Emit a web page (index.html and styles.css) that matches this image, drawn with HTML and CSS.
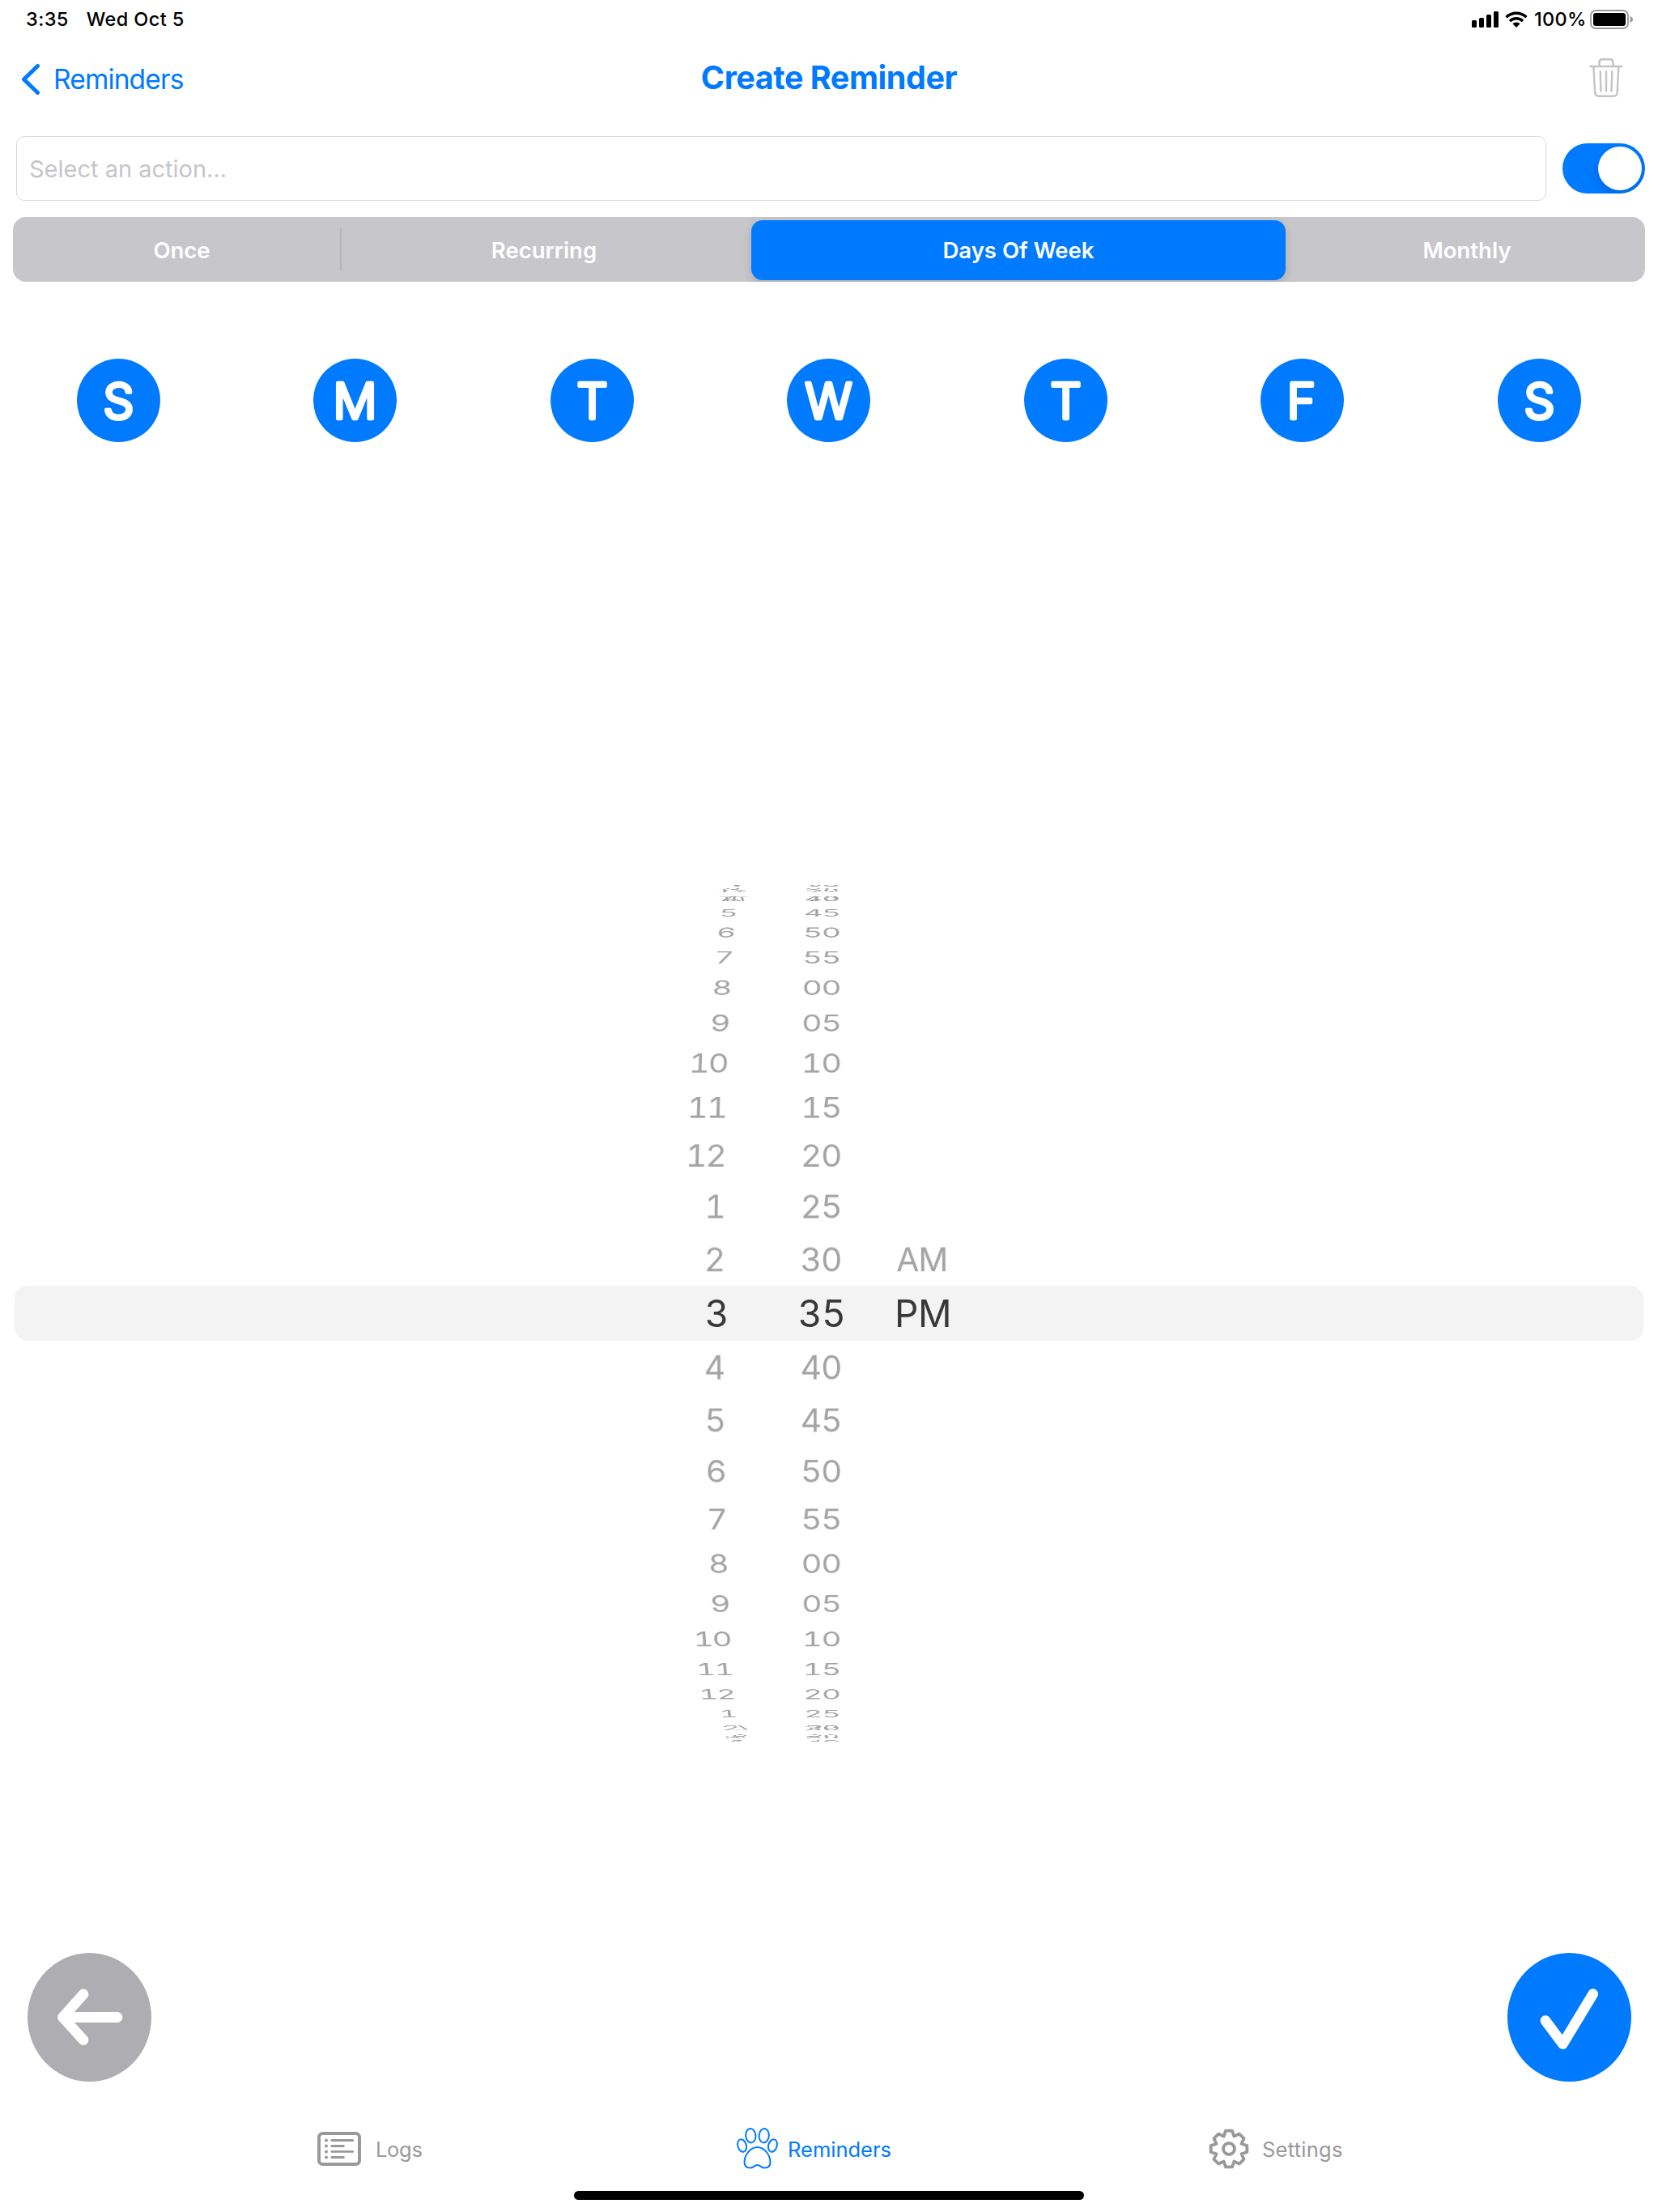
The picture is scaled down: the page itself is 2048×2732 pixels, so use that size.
FILE: index.html
```html
<!DOCTYPE html>
<html lang="en">
<head>
<meta charset="utf-8">
<title>Create Reminder</title>
<link rel="stylesheet" href="styles.css">
</head>
<body>
<div class="app">
  <div class="status">
    <span class="time">3:35</span>
    <span class="date">Wed Oct 5</span>
    <svg class="signal" width="33" height="20" viewBox="0 0 33 20"><rect y="11" width="6" height="9" rx="1.6"/><rect x="9" y="8" width="6" height="12" rx="1.6"/><rect x="18" y="4" width="6" height="16" rx="1.6"/><rect x="27" width="6" height="20" rx="1.6"/></svg>
    <svg class="wifi" width="28" height="20" viewBox="0 0 28 20"><g fill="none" stroke="#000" stroke-width="3.4"><path d="M1.5 7.3a18 18 0 0 1 25 0"/><path d="M6 12.1a11.4 11.4 0 0 1 16 0"/></g><path d="M9.4 15.2a6.8 6.8 0 0 1 9.2 0L14 20z"/></svg>
    <span class="percent">100%</span>
    <svg class="battery" width="54" height="24" viewBox="0 0 54 24"><rect x="1" y="1" width="46" height="22" rx="6" fill="none" stroke="#999" stroke-width="1.8"/><rect x="4" y="4" width="40" height="16" rx="3.2"/><path d="M49.5 8c4.6 1.500 4.600 6.500 0 8z" fill="#999"/></svg>
  </div>

  <header class="nav">
    <a class="back"><svg width="24" height="40" viewBox="0 0 24 40"><path d="M20.500 3.500 3.500 20 20.500 36.500" fill="none" stroke="#007aff" stroke-width="5" stroke-linecap="round" stroke-linejoin="round"/></svg><span>Reminders</span></a>
    <h1>Create Reminder</h1>
    <svg class="trash" width="42" height="48" viewBox="0 0 42 48" fill="none" stroke="#c4c4c4" stroke-width="2.400" stroke-linecap="round" stroke-linejoin="round"><path d="M1.500 10h39M12.500 9.500V5q0-3.700 3.500-3.700h10q3.500 0 3.500 3.700v4.500M5.500 10.500l1.600 31.500q.3 4.700 4.500 4.700h18.600q4.200 0 4.500-4.700l1.600-31.500M13.700 16.500l.8 24M21 16.500v24M28.300 16.500l-.8 24"/></svg>
  </header>

  <div class="action-row">
    <div class="field"><span>Select an action...</span></div>
    <div class="toggle"><div class="knob"></div></div>
  </div>

  <div class="segments">
    <div class="segment once"><span>Once</span></div>
    <div class="segment recurring"><span>Recurring</span></div>
    <div class="segment active"><span>Days Of Week</span></div>
    <div class="segment monthly"><span>Monthly</span></div>
  </div>

  <div class="days">
    <svg class="day"><text x="51.500" y="73.500">S</text></svg>
    <svg class="day"><text x="51.500" y="73.500">M</text></svg>
    <svg class="day"><text x="51.500" y="73.500">T</text></svg>
    <svg class="day"><text x="51.500" y="73.500">W</text></svg>
    <svg class="day"><text x="51.500" y="73.500">T</text></svg>
    <svg class="day"><text x="50.500" y="73.500">F</text></svg>
    <svg class="day"><text x="51.500" y="73.500">S</text></svg>
  </div>

  <div class="picker">
    <div class="wheels">
      <div class="wheel hours"></div>
      <div class="wheel minutes"></div>
      <div class="wheel period"></div>
    </div>
  </div>

  <div class="actions">
    <svg class="round grey" viewBox="0 0 153 159"><path d="M69 51 43.500 79.500 69 107.500M46 79.500h65" /></svg>
    <svg class="round blue" viewBox="0 0 153 159"><path d="M47 83.700 68.400 112.500 105.700 50.700"/></svg>
  </div>

  <nav class="tabs">
    <a class="tab logs"><svg width="54" height="42" viewBox="0 0 54 42"><rect x="2" y="2" width="50" height="38" rx="4.500" fill="none" stroke="#999" stroke-width="4"/><g fill="#999"><circle cx="11" cy="10.500" r="2"/><circle cx="11" cy="17.500" r="2"/><circle cx="11" cy="24.400" r="2"/><circle cx="11" cy="31.500" r="2"/></g><path d="M17.800 10.500h26M17.800 17.500h14.600M17.800 24.400h26M17.800 31.500h14.600" stroke="#999" stroke-width="2.800" stroke-linecap="round"/></svg><span>Logs</span></a>
    <a class="tab reminders"><svg width="51" height="51" viewBox="0 0 51 51" fill="none" stroke="#007aff" stroke-width="2"><ellipse cx="17.300" cy="9.700" rx="6.100" ry="8.700" transform="rotate(-5 17.300 9.700)"/><ellipse cx="33.700" cy="9.700" rx="6.100" ry="8.700" transform="rotate(5 33.700 9.700)"/><ellipse cx="6.600" cy="22" rx="5.200" ry="7.900" transform="rotate(-16 6.600 22)"/><ellipse cx="44.400" cy="22" rx="5.200" ry="7.900" transform="rotate(16 44.400 22)"/><path d="M25.500 24C16 24 9.500 34.500 9.500 42.500c0 5 3.500 7 7.500 7s5-3.500 8.500-3.500 4.500 3.500 8.500 3.500 7.500-2 7.500-7C41.500 34.500 35 24 25.500 24z"/></svg><span>Reminders</span></a>
    <a class="tab settings"><svg width="50" height="50" viewBox="-25 -25 50 50" fill="none" stroke="#999" stroke-width="3.800" stroke-linejoin="round"><path d="M-4-22.300H4L6.300-15.500 12.800-18.500 18.500-12.800 15.500-6.300 22.300-4V4L15.500 6.300 18.500 12.800 12.800 18.500 6.300 15.500 4 22.300H-4L-6.300 15.500-12.800 18.500-18.500 12.800-15.500 6.300-22.300 4V-4L-15.500-6.300-18.500-12.800-12.800-18.500-6.300-15.500z"/><circle r="7"/></svg><span>Settings</span></a>
  </nav>
  <div class="home"></div>
</div>
<script src="picker.js"></script>
</body>
</html>
```
FILE: styles.css
```css
* { box-sizing: border-box; }
body {
  margin: 0;
  background: #fff;
  color: #000;
  font-family: Inter, "Liberation Sans", sans-serif;
}
svg { display: block; flex: none; }
span { white-space: nowrap; }
.app {
  width: 2048px;
  height: 2732px;
  display: flex;
  flex-direction: column;
  overflow: hidden;
}

.status {
  height: 48px;
  padding: 0 30px 0 32px;
  display: flex;
  align-items: center;
  font-size: 23.5px;
  font-weight: 500;
}
.status span { margin-top: -2px; }
.time { letter-spacing: 0.4px; }
.date { margin-left: 22px; letter-spacing: 0.4px; }
.signal { margin-left: auto; }
.wifi { margin-left: 8px; }
.percent { margin-left: 8px; width: 65px; letter-spacing: 0.3px; }
.battery { margin-left: 4px; }

.nav {
  height: 96px;
  padding: 0 43px 0 26px;
  display: grid;
  grid-template-columns: 1fr auto 1fr;
  align-items: center;
}
.back {
  display: flex;
  align-items: center;
  gap: 16px;
  margin: 4px 0 0 0;
  color: #007aff;
  font-size: 33.5px;
  letter-spacing: -0.85px;
}
h1 {
  margin: 0 -17px 0 0;
  color: #007aff;
  font-size: 39.5px;
  font-weight: 700;
  letter-spacing: -0.45px;
}
.trash { justify-self: end; }

.action-row {
  margin-top: 24px;
  height: 80px;
  padding: 0 16px 0 20px;
  display: flex;
  align-items: center;
  justify-content: space-between;
}
.field {
  width: 1890px;
  height: 80px;
  padding-left: 15px;
  display: flex;
  align-items: center;
  border: 1px solid #d9d9db;
  border-radius: 10px;
  color: #c5c5c9;
  font-size: 29px;
}
.toggle {
  width: 102px;
  height: 62px;
  padding: 4px;
  display: flex;
  justify-content: flex-end;
  border-radius: 31px;
  background: #007aff;
  overflow: hidden;
}
.knob {
  width: 54px;
  height: 54px;
  border-radius: 50%;
  background: #fff;
  box-shadow: 0 6px 14px rgba(0, 0, 0, .15);
}

.segments {
  margin: 20px 16px 0;
  height: 80px;
  display: flex;
  align-items: center;
  border-radius: 16px;
  background: #c7c6cb;
  overflow: hidden;
  color: #fff;
  font-size: 27.5px;
  font-weight: 600;
}
.segment { display: flex; align-items: center; justify-content: center; }
.segment span { padding-top: 2px; }
.once { width: 406px; height: 54px; padding-left: 13px; border-right: 2px solid #b4b4b9; }
.recurring { width: 506px; padding-right: 6px; }
.active {
  width: 660px;
  height: 74px;
  margin-top: 2px;
  border-radius: 14px;
  background: #007aff;
  box-shadow: 0 4px 12px rgba(0, 0, 0, .14);
}
.active span { padding-top: 0; }
.monthly { width: 444px; padding-left: 4px; }

.days {
  margin: 95px 95.5px 0 94.5px;
  display: flex;
  justify-content: space-between;
}
.day {
  width: 103px;
  height: 103px;
  border-radius: 50%;
  background: #007aff;
}
.day text {
  font-size: 60px;
  font-weight: 300;
  text-anchor: middle;
  fill: #fff;
  stroke: #fff;
  stroke-width: 4.6px;
  stroke-linejoin: round;
}

/* Date wheels: rows sit on a cylinder seen in perspective */
.picker {
  margin-top: 546px;
  height: 1060px;
  display: flex;
  align-items: center;
  padding: 0 18px;
}
.wheels {
  width: 2012px;
  height: 68px;
  padding-left: 777px;
  display: flex;
  border-radius: 16px;
  background: #f3f3f3;
  perspective: 2220px;
  perspective-origin: 1006px 34px;
}
.wheel {
  width: 100px;
  height: 68px;
  display: grid;
  transform-style: preserve-3d;
  font-variant-numeric: tabular-nums;
}
.minutes { margin-left: 69px; }
.period { margin-left: 25px; }
.row {
  grid-area: 1 / 1;
  height: 68px;
  line-height: 68px;
  text-align: center;
  color: #a4a4a4;
  font-size: 41px;
  letter-spacing: -1px;
  white-space: nowrap;
  transform: translateZ(-670px) rotateX(calc(var(--n) * -5.715deg)) translateZ(670px);
}
.hours .row { margin: 0 1px 0 -1px; text-align: right; letter-spacing: -2px; }
.row.selected {
  transform: none;
  color: #383838;
  font-size: 46px;
  letter-spacing: -0.5px;
}
.minutes .selected, .period .selected { margin: 0 -1px 0 1px; }
.hours .row.selected { margin: 0 -5px 0 0; }

.actions {
  margin-top: 260px;
  padding: 0 33px 0 34px;
  display: flex;
  justify-content: space-between;
}
.round {
  width: 153px;
  height: 159px;
  border-radius: 50%;
  fill: none;
  stroke: #fff;
  stroke-width: 12.8px;
  stroke-linecap: round;
  stroke-linejoin: round;
}
.grey { background: #aeadb2; }
.blue { background: #007aff; }

.tabs {
  margin-top: 56px;
  height: 54px;
  display: flex;
  align-items: center;
  padding-left: 392px;
  font-size: 25.5px;
  color: #999;
}
.tab { display: flex; align-items: center; }
.logs { width: 518px; gap: 18px; letter-spacing: -0.3px; }
.reminders { width: 583px; gap: 12px; color: #007aff; }
.reminders svg { margin-top: -2px; }
.settings { gap: 16px; letter-spacing: 0.25px; }
.home {
  width: 630px;
  height: 11px;
  margin: 25px auto 0;
  border-radius: 6px;
  background: #000;
}
```
FILE: picker.js
```js
const REACH = 16;

function addRow(wheel, text, n) {
  const row = document.createElement('div');
  row.className = n === 0 ? 'row selected' : 'row';
  row.textContent = text;
  row.style.setProperty('--n', n);
  wheel.append(row);
}

const hours = document.querySelector('.hours');
const minutes = document.querySelector('.minutes');
const period = document.querySelector('.period');

for (let n = -REACH; n <= REACH; n++) {
  addRow(hours, String((2 + n + 24) % 12 + 1), n);
  addRow(minutes, String((35 + n * 5 + 120) % 60).padStart(2, '0'), n);
}
addRow(period, 'AM', -1);
addRow(period, 'PM', 0);
```
